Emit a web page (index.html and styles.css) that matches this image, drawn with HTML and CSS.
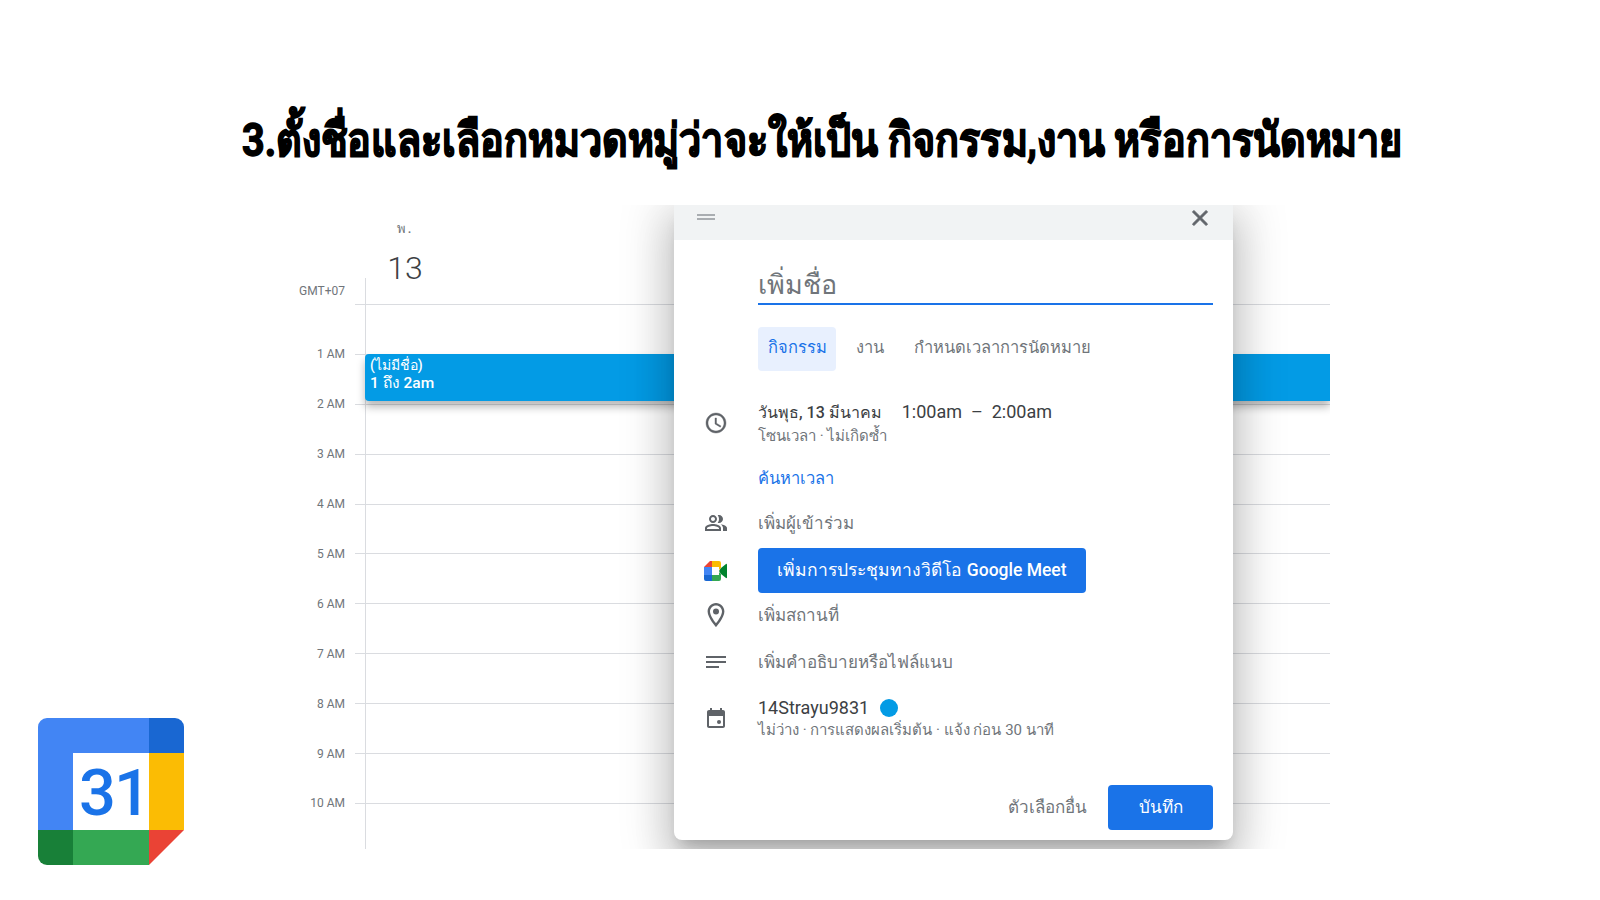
FILE: index.html
```html
<!DOCTYPE html>
<html lang="th">
<head>
    <meta charset="UTF-8">
    <meta name="viewport" content="width=device-width, initial-scale=1.0">
    <title>Google Calendar</title>
    <link rel="stylesheet" href="styles.css">
</head>
<body>
    <div class="slide">
        <h1 class="slide-title">3.ตั้งชื่อและเลือกหมวดหมู่ว่าจะให้เป็น กิจกรรม,งาน หรือการนัดหมาย</h1>

        <div class="slide-body">
            <svg class="cal-logo" viewBox="0 0 146 147">
                <path fill="#4285f4" d="M111 0H9a9 9 0 0 0-9 9v103h35V35h76z"/>
                <path fill="#1967d2" d="M111 0h26a9 9 0 0 1 9 9v26h-35z"/>
                <rect fill="#fbbc04" x="111" y="35" width="35" height="77"/>
                <path fill="#188038" d="M0 112h35v35H9a9 9 0 0 1-9-9z"/>
                <rect fill="#34a853" x="35" y="112" width="76" height="35"/>
                <path fill="#ea4335" d="M111 112h35l-35 35z"/>
                <rect fill="#fff" x="35" y="35" width="76" height="77"/>
                <text class="cal-logo-num" x="76" y="97" text-anchor="middle">31</text>
            </svg>

            <div class="stage">
                <div class="cal-head">
                    <div class="gmt">GMT+07</div>
                    <div class="day">
                        <div class="day-name">พ.</div>
                        <div class="day-num">13</div>
                    </div>
                </div>
                <div class="hour"><span class="hour-label"></span><span class="hour-line"></span></div>
                <div class="hour"><span class="hour-label">1 AM</span><span class="hour-line"></span></div>
                <div class="hour"><span class="hour-label">2 AM</span><span class="hour-line"></span></div>
                <div class="hour"><span class="hour-label">3 AM</span><span class="hour-line"></span></div>
                <div class="hour"><span class="hour-label">4 AM</span><span class="hour-line"></span></div>
                <div class="hour"><span class="hour-label">5 AM</span><span class="hour-line"></span></div>
                <div class="hour"><span class="hour-label">6 AM</span><span class="hour-line"></span></div>
                <div class="hour"><span class="hour-label">7 AM</span><span class="hour-line"></span></div>
                <div class="hour"><span class="hour-label">8 AM</span><span class="hour-line"></span></div>
                <div class="hour"><span class="hour-label">9 AM</span><span class="hour-line"></span></div>
                <div class="hour"><span class="hour-label">10 AM</span><span class="hour-line"></span></div>

                <div class="day-rule"></div>
                <div class="event">
                    <div>(ไม่มีชื่อ)</div>
                    <div class="event-time">1 ถึง 2am</div>
                </div>

                <div class="dialog">
                    <div class="dialog-top">
                        <svg class="drag" viewBox="0 0 18 6"><path fill="#a9adb1" d="M0 0h18v2H0zM0 4h18v2H0z"/></svg>
                        <svg class="close" viewBox="0 0 24 24"><path fill="#5f6368" d="M19 6.41L17.59 5 12 10.59 6.41 5 5 6.41 10.59 12 5 17.59 6.41 19 12 13.41 17.59 19 19 17.59 13.41 12z"/></svg>
                    </div>
                    <div class="dialog-title">เพิ่มชื่อ</div>
                    <div class="tabs">
                        <span class="tab tab-active">กิจกรรม</span>
                        <span class="tab tab-task">งาน</span>
                        <span class="tab">กำหนดเวลาการนัดหมาย</span>
                    </div>

                    <div class="row row-when">
                        <svg class="row-icon icon-clock" viewBox="0 0 24 24"><path fill="#5f6368" d="M11.99 2C6.47 2 2 6.48 2 12s4.47 10 9.99 10C17.52 22 22 17.52 22 12S17.52 2 11.99 2zM12 20c-4.42 0-8-3.58-8-8s3.58-8 8-8 8 3.58 8 8-3.58 8-8 8zm.5-13H11v6l5.25 3.15.75-1.23-4.5-2.67z"/></svg>
                        <div>
                            <div class="main-line"><span class="when-date">วันพุธ, 13 มีนาคม</span><span class="when-time">1:00am &nbsp;–&nbsp; 2:00am</span></div>
                            <div class="sub-line">โซนเวลา · ไม่เกิดซ้ำ</div>
                        </div>
                    </div>

                    <div class="row row-find"><a class="find-link">ค้นหาเวลา</a></div>

                    <div class="row row-guests">
                        <svg class="row-icon" viewBox="0 0 24 24"><path fill="#5f6368" d="M16.67 13.13C18.04 14.06 19 15.32 19 17v3h4v-3c0-2.18-3.57-3.47-6.33-3.87zM15 12c2.21 0 4-1.79 4-4s-1.79-4-4-4c-.47 0-.91.1-1.33.24C14.5 5.27 15 6.58 15 8s-.5 2.73-1.33 3.76c.42.14.86.24 1.33.24zM9 12c2.21 0 4-1.79 4-4s-1.79-4-4-4-4 1.79-4 4 1.79 4 4 4zm0-6c1.1 0 2 .9 2 2s-.9 2-2 2-2-.9-2-2 .9-2 2-2zM9 13c-2.67 0-8 1.34-8 4v3h16v-3c0-2.66-5.33-4-8-4zm6 5H3v-.99C3.2 16.29 6.3 15 9 15s5.8 1.29 6 2v1z"/></svg>
                        <span class="muted-line">เพิ่มผู้เข้าร่วม</span>
                    </div>

                    <div class="row row-meet">
                        <svg class="row-icon" viewBox="0 0 24 20">
                            <path fill="#ea4335" d="M6 0h2v6H0z"/>
                            <path fill="#4285f4" d="M0 6h8v8H0z"/>
                            <path fill="#1967d2" d="M0 14h8v6H2a2 2 0 0 1-2-2z"/>
                            <path fill="#fbbc04" d="M8 0h7a2 2 0 0 1 2 2v5l-2 2V6H8z"/>
                            <path fill="#34a853" d="M8 14h7v-3l2 2v5a2 2 0 0 1-2 2H8z"/>
                            <path fill="#00832d" d="M15 10l2-3 5-4c.5-.3 1-.1 1 .5v13c0 .6-.5.8-1 .5l-5-4z"/>
                        </svg>
                        <button class="meet-btn">เพิ่มการประชุมทางวิดีโอ Google Meet</button>
                    </div>

                    <div class="row row-place">
                        <svg class="row-icon" viewBox="4 2 16 20"><path fill="#5f6368" d="M12 2C8.13 2 5 5.13 5 9c0 5.25 7 13 7 13s7-7.75 7-13c0-3.87-3.13-7-7-7zM7 9c0-2.76 2.24-5 5-5s5 2.24 5 5c0 2.88-2.88 7.19-5 9.88C9.92 16.21 7 11.85 7 9z"/><circle fill="#5f6368" cx="12" cy="9" r="2.5"/></svg>
                        <span class="muted-line">เพิ่มสถานที่</span>
                    </div>

                    <div class="row row-notes">
                        <svg class="row-icon" viewBox="0 0 24 24"><path fill="#5f6368" d="M2 18h13v-2H2zM2 6v2h20V6zm0 7h20v-2H2z"/></svg>
                        <span class="muted-line">เพิ่มคำอธิบายหรือไฟล์แนบ</span>
                    </div>

                    <div class="row row-owner">
                        <svg class="row-icon" viewBox="0 0 24 24"><path fill="#5f6368" d="M16 1v2H8V1H6v2H5c-1.11 0-1.99.9-1.99 2L3 19c0 1.1.89 2 2 2h14c1.1 0 2-.9 2-2V5c0-1.1-.9-2-2-2h-1V1h-2zm3 18H5V9h14v10z"/><rect fill="#5f6368" x="13" y="13" width="4" height="4" rx="2"/></svg>
                        <div>
                            <div class="owner-line">14Strayu9831<span class="owner-dot"></span></div>
                            <div class="sub-line">ไม่ว่าง · การแสดงผลเริ่มต้น · แจ้ง ก่อน 30 นาที</div>
                        </div>
                    </div>

                    <div class="dialog-foot">
                        <span class="more-btn">ตัวเลือกอื่น</span>
                        <button class="save-btn">บันทึก</button>
                    </div>
                </div>
            </div>
        </div>
    </div>
</body>
</html>
```

FILE: styles.css
```css
* {
    box-sizing: border-box;
}

body {
    margin: 0;
    background-color: #fff;
    font-family: Roboto, "Noto Sans", sans-serif;
}

.slide {
    width: 1600px;
    height: 900px;
    overflow: hidden;
    display: flex;
    flex-direction: column;
}

.slide-title {
    height: 205px;
    margin: 0;
    padding: 110px 0 0 52px;
    text-align: center;
    font-size: 46px;
    line-height: 60px;
    font-weight: 700;
    color: #000;
    white-space: nowrap;
    -webkit-text-stroke: 1.4px #000;
    transform: scaleX(0.857);
}

.slide-body {
    display: flex;
    align-items: flex-start;
    padding-left: 38px;
}

.cal-logo {
    width: 146px;
    height: 147px;
    margin-top: 513px;
    flex-shrink: 0;
}

.cal-logo-num {
    font-family: Roboto, sans-serif;
    font-size: 65px;
    font-weight: 500;
    letter-spacing: -2px;
    fill: #1a73e8;
}

/* calendar */
.stage {
    position: relative;
    width: 1040px;
    height: 644px;
    margin-left: 106px;
    overflow: hidden;
}

.cal-head {
    height: 99px;
    position: relative;
}

.gmt {
    position: absolute;
    left: 0;
    top: 78px;
    width: 55px;
    text-align: right;
    font-size: 12px;
    line-height: 16px;
    color: #70757a;
}

.day {
    position: absolute;
    left: 75px;
    top: 0;
    width: 80px;
    text-align: center;
}

.day-name {
    margin-top: 16px;
    font-size: 13px;
    line-height: 16px;
    letter-spacing: 2px;
    font-weight: 500;
    color: #70757a;
}

.day-num {
    margin-top: 11px;
    font-size: 32px;
    line-height: 40px;
    font-weight: 300;
    color: #3c4043;
}

.hour {
    display: flex;
    height: 49.9px;
}

.hour-label {
    width: 55px;
    margin-top: -7.5px;
    height: 16px;
    text-align: right;
    font-size: 12px;
    line-height: 16px;
    color: #70757a;
}

.hour-line {
    flex: 1;
    margin-left: 10px;
    border-top: 1px solid #dadce0;
}

.day-rule {
    position: absolute;
    left: 75px;
    top: 73px;
    bottom: 0;
    width: 1px;
    background-color: #dadce0;
}

.event {
    position: absolute;
    left: 75px;
    right: 0;
    top: 149px;
    height: 47px;
    padding: 2px 5px;
    background-color: #039be5;
    border-radius: 4px 0 0 4px;
    box-shadow: 0 6px 8px rgba(0, 0, 0, 0.28);
    color: #fff;
    font-size: 14px;
    line-height: 19px;
    font-weight: 500;
}

.event-time {
    font-size: 15.5px;
    line-height: 17px;
}

/* dialog */
.dialog {
    position: absolute;
    left: 384px;
    top: 0;
    width: 559px;
    height: 635px;
    background-color: #fff;
    border-radius: 0 0 8px 8px;
    box-shadow: 0 24px 38px 3px rgba(0, 0, 0, 0.14), 0 9px 46px 14px rgba(0, 0, 0, 0.13), 0 11px 15px -7px rgba(0, 0, 0, 0.2);
}

.dialog-top {
    height: 35px;
    background-color: #f1f3f4;
    display: flex;
    align-items: flex-start;
    justify-content: space-between;
    padding: 0 20px 0 23px;
}

.drag {
    width: 18px;
    height: 6px;
    margin-top: 9px;
}

.close {
    width: 26px;
    height: 26px;
}

.close path {
    stroke: #5f6368;
    stroke-width: 0.8;
}

.icon-clock path {
    stroke: #5f6368;
    stroke-width: 0.4;
}

.dialog-title {
    margin: 8px 20px 0 84px;
    height: 57px;
    padding-top: 19px;
    font-size: 27px;
    line-height: 36px;
    color: #70757a;
    border-bottom: 2px solid #1a73e8;
}

.tabs {
    display: flex;
    margin: 22px 0 0 84px;
}

.tab {
    height: 44px;
    padding: 0 10px;
    margin-right: 10px;
    font-size: 16.5px;
    line-height: 42px;
    font-weight: 500;
    color: #70757a;
    border-radius: 4px;
}

.tab-active {
    width: 78px;
    background-color: #e8f0fe;
    color: #1a73e8;
}

.row {
    display: flex;
    align-items: center;
}

.row-icon {
    width: 24px;
    height: 24px;
    margin: 0 30px;
    flex-shrink: 0;
}

.row-when {
    margin-top: 29px;
}

.main-line {
    font-size: 16px;
    line-height: 24px;
    color: #3c4043;
}

.when-date {
    font-weight: 500;
    margin-right: 20px;
}

.when-time {
    font-size: 18px;
}

.sub-line {
    margin-top: 1px;
    font-size: 15px;
    line-height: 20px;
    color: #70757a;
}

.row-find {
    margin: 21px 0 0 84px;
}

.find-link {
    font-size: 16.5px;
    line-height: 24px;
    font-weight: 500;
    color: #1a73e8;
}

.row-guests {
    margin-top: 20px;
}

.muted-line {
    font-size: 17px;
    line-height: 24px;
    font-weight: 500;
    color: #70757a;
}

.row-meet {
    margin-top: 13px;
}

.meet-btn {
    width: 328px;
    height: 45px;
    padding: 0 0 2px;
    border: none;
    border-radius: 4px;
    background-color: #1a73e8;
    color: #fff;
    font-family: inherit;
    font-size: 17.5px;
    font-weight: 500;
}

.row-place {
    margin-top: 10px;
}

.row-notes {
    margin-top: 23px;
}

.row-owner {
    margin-top: 23px;
}

.owner-line {
    display: flex;
    align-items: center;
    font-size: 18px;
    line-height: 22px;
    color: #3c4043;
}

.owner-dot {
    width: 18px;
    height: 18px;
    margin-left: 11px;
    border-radius: 50%;
    background-color: #039be5;
}

.dialog-foot {
    display: flex;
    justify-content: flex-end;
    align-items: center;
    margin-top: 45px;
    padding-right: 20px;
}

.more-btn {
    margin-right: 21px;
    padding-bottom: 2px;
    font-size: 17px;
    font-weight: 500;
    color: #70757a;
}

.save-btn {
    width: 105px;
    height: 45px;
    padding: 0 0 2px;
    border: none;
    border-radius: 4px;
    background-color: #1a73e8;
    color: #fff;
    font-family: inherit;
    font-size: 17px;
    font-weight: 500;
}
```
